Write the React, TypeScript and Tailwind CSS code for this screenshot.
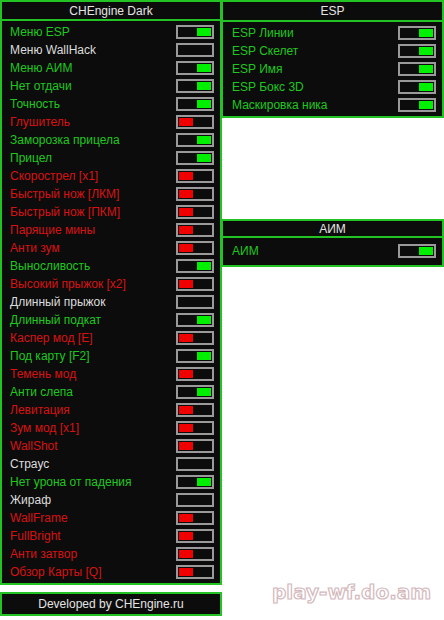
type Item = { label: string; state: "on" | "off" | "none" }

const mainItems: Item[] = [
  { label: "Меню ESP", state: "on" },
  { label: "Меню WallHack", state: "none" },
  { label: "Меню АИМ", state: "on" },
  { label: "Нет отдачи", state: "on" },
  { label: "Точность", state: "on" },
  { label: "Глушитель", state: "off" },
  { label: "Заморозка прицела", state: "on" },
  { label: "Прицел", state: "on" },
  { label: "Скорострел [x1]", state: "off" },
  { label: "Быстрый нож [ЛКМ]", state: "off" },
  { label: "Быстрый нож [ПКМ]", state: "off" },
  { label: "Парящие мины", state: "off" },
  { label: "Анти зум", state: "off" },
  { label: "Выносливость", state: "on" },
  { label: "Высокий прыжок [x2]", state: "off" },
  { label: "Длинный прыжок", state: "none" },
  { label: "Длинный подкат", state: "on" },
  { label: "Каспер мод [E]", state: "off" },
  { label: "Под карту [F2]", state: "on" },
  { label: "Темень мод", state: "off" },
  { label: "Анти слепа", state: "on" },
  { label: "Левитация", state: "off" },
  { label: "Зум мод [x1]", state: "off" },
  { label: "WallShot", state: "off" },
  { label: "Страус", state: "none" },
  { label: "Нет урона от падения", state: "on" },
  { label: "Жираф", state: "none" },
  { label: "WallFrame", state: "off" },
  { label: "FullBright", state: "off" },
  { label: "Анти затвор", state: "off" },
  { label: "Обзор Карты [Q]", state: "off" },
]

const espItems: Item[] = [
  { label: "ESP Линии", state: "on" },
  { label: "ESP Скелет", state: "on" },
  { label: "ESP Имя", state: "on" },
  { label: "ESP Бокс 3D", state: "on" },
  { label: "Маскировка ника", state: "on" },
]

function Toggle({ state }: { state: Item["state"] }) {
  return (
    <div
      className={
        "w-[38px] h-[14px] border-2 border-[#9a9a9a] bg-[#0c0c0c] flex items-center px-[1px] " +
        (state === "on" ? "justify-end" : "justify-start")
      }
    >
      {state === "on" && <div className="w-[14px] h-[8px] bg-[#00f000]" />}
      {state === "off" && <div className="w-[14px] h-[8px] bg-[#f00000]" />}
    </div>
  )
}

function Row({ item }: { item: Item }) {
  const color =
    item.state === "on" ? "text-[#1ec81e]" : item.state === "off" ? "text-[#d81212]" : "text-[#dcdcdc]"
  return (
    <div className="h-[18px] flex items-center justify-between pl-[8px] pr-[6px]">
      <span className={color}>{item.label}</span>
      <Toggle state={item.state} />
    </div>
  )
}

export default function App() {
  return (
    <div
      className="relative w-[444px] h-[620px] bg-white flex text-[12px] leading-none"
      style={{ fontFamily: '"Liberation Sans", Arial, sans-serif' }}
    >
      <div className="w-[222px] flex flex-col">
        <div className="border-2 border-[#22c322] bg-[#0c0c0c]">
          <div className="h-[19px] flex items-center justify-center text-[#e4e4e4] border-b-2 border-[#22c322]">
            CHEngine Dark
          </div>
          <div className="py-[2px]">
            {mainItems.map((it) => (
              <Row key={it.label} item={it} />
            ))}
          </div>
        </div>
        <div className="mt-[7px] border-2 border-[#22c322] bg-[#0c0c0c] h-[24px] flex items-center justify-center text-[#e4e4e4]">
          Developed by CHEngine.ru
        </div>
      </div>

      <div className="w-[222px] flex flex-col">
        <div className="border-y-2 border-r-2 border-l border-[#22c322] bg-[#0c0c0c]">
          <div className="h-[20px] flex items-center justify-center text-[#e4e4e4] border-b-2 border-[#22c322]">
            ESP
          </div>
          <div className="py-[2px] pl-[1px]">
            {espItems.map((it) => (
              <Row key={it.label} item={it} />
            ))}
          </div>
        </div>
        <div className="mt-[101px] border-y-2 border-r-2 border-l border-[#22c322] bg-[#0c0c0c]">
          <div className="h-[17px] flex items-center justify-center text-[#e4e4e4] border-b-2 border-[#22c322]">
            АИМ
          </div>
          <div className="pt-[4px] pb-[5px] pl-[1px]">
            <Row item={{ label: "АИМ", state: "on" }} />
          </div>
        </div>
      </div>

      <div
        className="absolute left-[272px] top-[582px] text-[20px] font-bold text-transparent [-webkit-text-stroke:1.2px_#d4b8bc]"
        style={{ fontFamily: '"DejaVu Sans", Verdana, sans-serif' }}
      >
        play-wf.do.am
      </div>
    </div>
  )
}
